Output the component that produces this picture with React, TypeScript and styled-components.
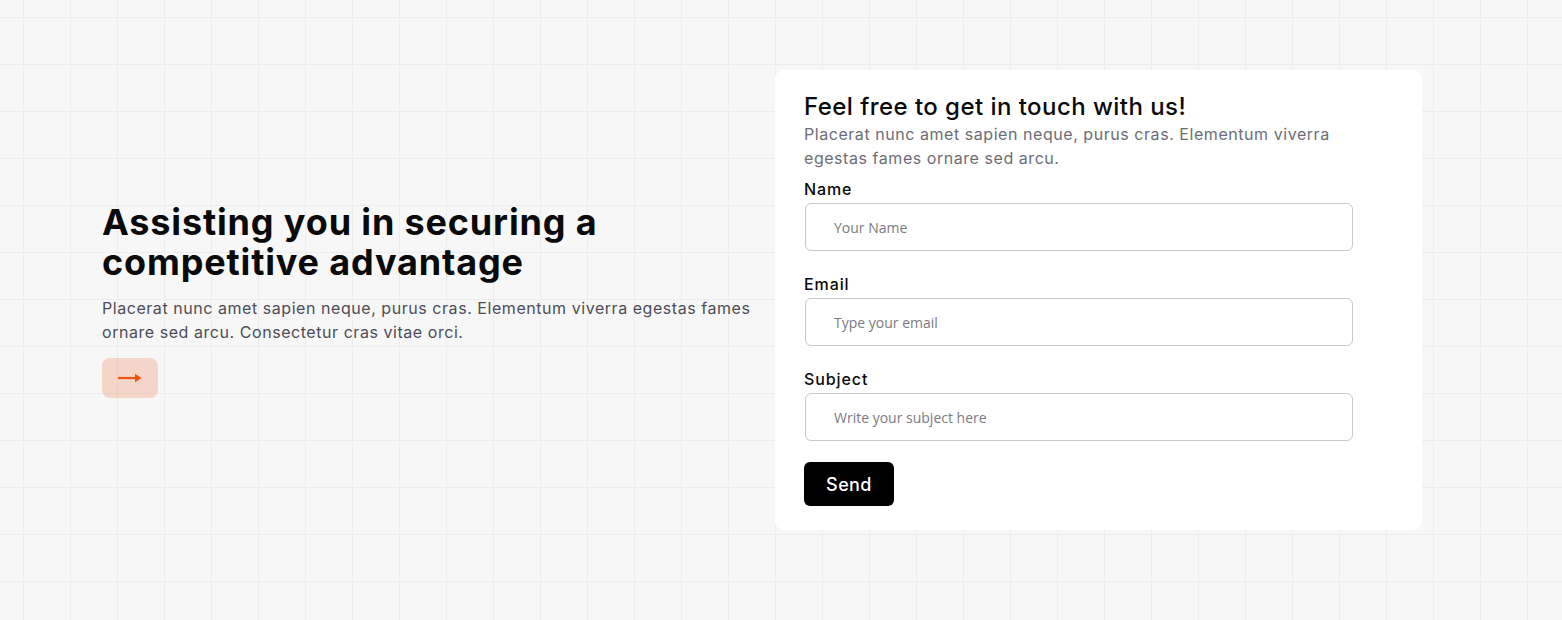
import styled, { createGlobalStyle } from "styled-components";

const GlobalStyle = createGlobalStyle`
  * {
    box-sizing: border-box;
  }
  body {
    margin: 0;
    background: #f7f7f7;
    font-family: Inter, "Noto Sans", sans-serif;
  }
`;

export const Page = styled.section`
  min-height: 620px;
  padding: 70px 0 90px 102px;
  background-color: #f7f7f7;
  background-image: linear-gradient(to right, #ededed 1px, transparent 1px),
    linear-gradient(to bottom, #ededed 1px, transparent 1px);
  background-size: 47px 47px;
  background-position: 23px 17px;
  display: grid;
  grid-template-columns: 655px 647px;
  column-gap: 18px;
  align-items: center;
`;

export const Intro = styled.div`
  display: flex;
  flex-direction: column;
  padding-bottom: 1px;
`;

export const Headline = styled.h1`
  margin: 0;
  font-size: 36px;
  line-height: 40px;
  font-weight: 700;
  color: #0a0a0a;
  letter-spacing: 0.85px;
`;

export const Lead = styled.p`
  margin: 14px 0 0;
  font-size: 16px;
  line-height: 24px;
  color: #4d4d57;
  letter-spacing: 0.55px;
`;

export const ArrowButton = styled.button`
  margin-top: 14px;
  width: 56px;
  height: 40px;
  border: none;
  border-radius: 8px;
  background: rgba(233, 86, 15, 0.2);
  display: flex;
  align-items: center;
  justify-content: center;
  cursor: pointer;
`;

export const Card = styled.div`
  background: #ffffff;
  border-radius: 9px;
  padding: 22px 29px 24px;
  display: flex;
  flex-direction: column;
`;

export const CardTitle = styled.h2`
  margin: 0;
  font-size: 24px;
  line-height: 30px;
  font-weight: 500;
  color: #0a0a0a;
  letter-spacing: 0.45px;
`;

export const CardText = styled.p`
  margin: 0;
  font-size: 16px;
  line-height: 24px;
  color: #6d6d78;
  letter-spacing: 0.55px;
`;

export const Form = styled.form`
  margin-top: 7px;
  display: flex;
  flex-direction: column;
`;

export const Field = styled.label`
  display: flex;
  flex-direction: column;
  gap: 2px;
  margin-bottom: 21px;
`;

export const FieldLabel = styled.span`
  font-size: 16px;
  line-height: 24px;
  font-weight: 500;
  color: #0a0a0a;
  letter-spacing: 0.9px;
`;

export const Input = styled.input`
  margin-left: 1px;
  width: 548px;
  height: 48px;
  border: 1px solid #c9c9cc;
  border-radius: 6px;
  padding: 0 28px;
  font-family: "Open Sans", Lato, sans-serif;
  font-size: 14px;
  color: #222;
  background: #fff;
  outline: none;
  &::placeholder {
    color: #7b7b82;
  }
`;

export const SendButton = styled.button`
  width: 90px;
  height: 44px;
  border: none;
  border-radius: 6px;
  background: #000;
  color: #fff;
  font-family: Inter, sans-serif;
  font-size: 18px;
  font-weight: 500;
  letter-spacing: 0.4px;
  cursor: pointer;
`;

function ArrowRight() {
  return (
    <svg width="24" height="12" viewBox="0 0 24 12" fill="none">
      <path d="M0 6h19" stroke="#e9560f" strokeWidth="2.2" />
      <path d="M17 1.8l6.5 4.2-6.5 4.2z" fill="#e9560f" />
    </svg>
  );
}

const fields = [
  { label: "Name", placeholder: "Your Name", type: "text" },
  { label: "Email", placeholder: "Type your email", type: "email" },
  { label: "Subject", placeholder: "Write your subject here", type: "text" },
];

export default function App() {
  return (
    <>
      <GlobalStyle />
      <Page>
        <Intro>
          <Headline>
            Assisting you in securing a<br />
            competitive advantage
          </Headline>
          <Lead>
            Placerat nunc amet sapien neque, purus cras. Elementum viverra
            egestas fames ornare sed arcu. Consectetur cras vitae orci.
          </Lead>
          <ArrowButton type="button" aria-label="Learn more">
            <ArrowRight />
          </ArrowButton>
        </Intro>
        <Card>
          <CardTitle>Feel free to get in touch with us!</CardTitle>
          <CardText>
            Placerat nunc amet sapien neque, purus cras. Elementum viverra
            egestas fames ornare sed arcu.
          </CardText>
          <Form onSubmit={(e) => e.preventDefault()}>
            {fields.map((f) => (
              <Field key={f.label}>
                <FieldLabel>{f.label}</FieldLabel>
                <Input type={f.type} placeholder={f.placeholder} />
              </Field>
            ))}
            <SendButton type="submit">Send</SendButton>
          </Form>
        </Card>
      </Page>
    </>
  );
}
